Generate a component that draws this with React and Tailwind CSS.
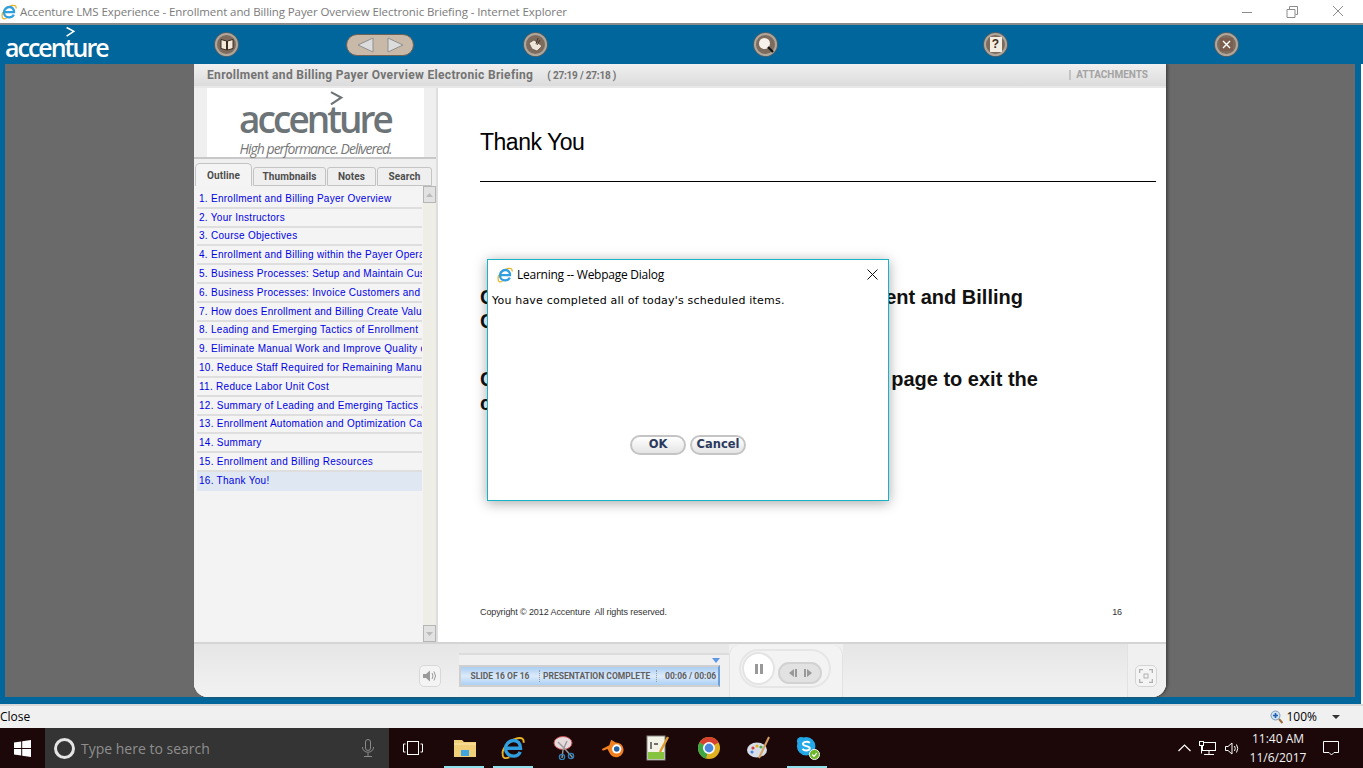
import React from 'react';

const outline = [
  '1. Enrollment and Billing Payer Overview',
  '2. Your Instructors',
  '3. Course Objectives',
  '4. Enrollment and Billing within the Payer Operations',
  '5. Business Processes: Setup and Maintain Customers',
  '6. Business Processes: Invoice Customers and Receive',
  '7. How does Enrollment and Billing Create Value',
  '8. Leading and Emerging Tactics of Enrollment',
  '9. Eliminate Manual Work and Improve Quality of',
  '10. Reduce Staff Required for Remaining Manual',
  '11. Reduce Labor Unit Cost',
  '12. Summary of Leading and Emerging Tactics and',
  '13. Enrollment Automation and Optimization Case',
  '14. Summary',
  '15. Enrollment and Billing Resources',
  '16. Thank You!',
];

const Chevron = ({ className, color }) => (
  <svg className={className} viewBox="0 0 15 20" fill="none">
    <path d="M1 2.5 L13 9 L1 17" stroke={color} strokeWidth="2.6" />
  </svg>
);

const IeIcon = ({ size = 16 }) => (
  <svg width={size} height={size} viewBox="0 0 16 16" fill="none">
    <path d="M1.2 12 C0.3 9 5 3 11 1.5 C14 0.8 15.5 2 15 4.5" stroke="#e8b428" strokeWidth="1.3" />
    <path d="M3.8 8.2 H13 C13 4.8 11 3 8.4 3 C5.4 3 3 5.4 3 8.4 C3 11.4 5.4 13.4 8.4 13.4 C10.4 13.4 12 12.4 12.8 10.6" stroke="#2f9fe0" strokeWidth="2.3" />
    <path d="M1.2 12 C0.8 14.8 3 15.4 5.6 14.2" stroke="#e8b428" strokeWidth="1.2" />
  </svg>
);

const RoundBtn = ({ ml, children }) => (
  <div className={`${ml} w-[23px] h-[23px] shrink-0 rounded-full bg-[#7d6c5e] border-2 border-[#b0a79c] flex items-center justify-center shadow-[0_0_0_1px_#4f5f68]`}>
    {children}
  </div>
);

const Tab = ({ label, active, w }) => (
  <div className={`${w} ${active ? 'h-[23px] bg-[#f4f4f4] border-b-0 rounded-t-[5px]' : 'h-[19px] bg-[#efefef] rounded-t-[3px] pb-[1px]'} border border-[#c4c4c4] flex items-center justify-center text-[10px] font-bold text-[#4d4d4d] tracking-[0.1px] font-['Roboto',sans-serif]`}>
    {label}
  </div>
);

const TaskIcon = ({ ml, children }) => (
  <div className={`${ml} w-6 h-6 shrink-0 flex items-center justify-center relative`}>{children}</div>
);

export default function App() {
  return (
    <div className="w-[1363px] h-[768px] overflow-hidden relative flex flex-col bg-white font-['Liberation_Sans',sans-serif]">
      {/* IE title bar */}
      <div className="h-[25px] shrink-0 bg-white border-b-2 border-[#8a8a8a] flex items-center">
        <div className="ml-[1px]"><IeIcon /></div>
        <span className="ml-[3px] text-[11.5px] text-[#7b7b7b] font-['Open_Sans',sans-serif] tracking-[-0.09px] whitespace-nowrap">
          Accenture LMS Experience - Enrollment and Billing Payer Overview Electronic Briefing - Internet Explorer
        </span>
        <svg className="ml-auto mr-[20px]" width="101" height="14" viewBox="0 0 101 14" fill="none" stroke="#8c8c8c">
          <path d="M0 7.5 H10" />
          <path d="M45 4.5 H53 V12.5 H45 Z M47.5 4 V1.5 H55.5 V9.5 H53.5" />
          <path d="M91 1 L101 11 M101 1 L91 11" />
        </svg>
      </div>

      {/* course toolbar */}
      <div className="h-[39px] shrink-0 bg-[#00669b] flex items-center relative">
        <div className="relative ml-[5px] w-[103px] text-white text-[25px] leading-none font-semibold font-['Open_Sans',sans-serif] tracking-[-2px] mt-[5px] whitespace-nowrap">
          accenture
          <Chevron className="absolute left-[60px] top-[-9px] w-[11px] h-[12px]" color="#ffffff" />
        </div>
        <RoundBtn ml="ml-[107px]">
          <svg width="14" height="13" viewBox="0 0 14 13"><path d="M1 1.5 L6.5 3 V12 L1 10.5 Z M13 1.5 L7.5 3 V12 L13 10.5 Z" fill="#f3e9da" stroke="#2e2015" strokeWidth="0.9" /></svg>
        </RoundBtn>
        <div className="ml-[108px] w-[68px] h-[22px] rounded-full bg-[#c8b9a8] border border-[#6e6155] flex items-center justify-center gap-[13px]">
          <svg width="17" height="16" viewBox="0 0 17 16"><path d="M16 1 V15 L1 8 Z" fill="#dcdcdc" stroke="#8f8f8f" /></svg>
          <svg width="17" height="16" viewBox="0 0 17 16"><path d="M1 1 V15 L16 8 Z" fill="#dcdcdc" stroke="#8f8f8f" /></svg>
        </div>
        <RoundBtn ml="ml-[110px]">
          <svg width="16" height="16" viewBox="0 0 16 16"><path d="M1 6 L6 3 L14 9 L9 14 L4 12 Z" fill="#efe6da" stroke="#5a4a3c" strokeWidth="0.7" /><path d="M10 1 L8 7 M12 3 L9 8" stroke="#4a3a2c" /></svg>
        </RoundBtn>
        <RoundBtn ml="ml-[207px]">
          <svg width="16" height="16" viewBox="0 0 16 16"><circle cx="6.5" cy="6.5" r="5.5" fill="#f5f1ea" /><path d="M10 10 L15 15" stroke="#111" strokeWidth="2.2" /></svg>
        </RoundBtn>
        <RoundBtn ml="ml-[207px]">
          <div className="w-[12px] h-[15px] bg-[#f4ede2] text-[#3d2c1e] text-[12px] font-bold leading-[15px] text-center">?</div>
        </RoundBtn>
        <RoundBtn ml="ml-[208px]">
          <div className="w-[13px] h-[13px] bg-[#7a5f50] text-white flex items-center justify-center">
            <svg width="9" height="9" viewBox="0 0 9 9"><path d="M1 1 L8 8 M8 1 L1 8" stroke="#fff" strokeWidth="1.4" /></svg>
          </div>
        </RoundBtn>
      </div>

      {/* stage */}
      <div className="h-[640px] shrink-0 mr-[2px] bg-[#00669b] pl-[5px] pr-[6px] pb-[7px]">
        <div className="h-full bg-[#6a6a6a] pl-[189px]">
          <div className="w-[972px] h-full flex flex-col bg-white rounded-b-[14px] overflow-hidden shadow-[2px_0_3px_#444]">
            <div className="h-[24px] shrink-0 bg-gradient-to-b from-[#f0f0f0] to-[#dcdcdc] border-b-2 border-[#e8e8e8] flex items-center pl-[13px] pr-[18px] font-['Roboto',sans-serif] font-bold text-[#737373]">
              <span className="text-[12px] tracking-[0.33px]">Enrollment and Billing Payer Overview Electronic Briefing</span>
              <span className="ml-[14px] text-[10px] tracking-[-0.2px]">( 27:19 / 27:18 )</span>
              <span className="ml-auto pl-[5px] border-l-2 border-[#c4c4c4] text-[10px] leading-[10px] text-[#a3a3a3]">ATTACHMENTS</span>
            </div>

            <div className="flex-1 flex min-h-0">
              {/* sidebar */}
              <div className="w-[244px] shrink-0 bg-[#efefef] border-r-2 border-[#dedede] flex flex-col">
                <div className="h-[71px] shrink-0 border-b-2 border-[#c8c8c8]">
                  <div className="ml-[13px] w-[217px] h-full bg-white relative flex flex-col items-center text-[#6d7478] font-['Open_Sans',sans-serif]">
                    <div className="mt-[10px] ml-[-1px] text-[37px] leading-[42px] font-semibold tracking-[-2.95px]">accenture</div>
                    <div className="text-[14px] leading-[16px] italic tracking-[-1px] mt-[1px] text-[#777]">High performance. Delivered.</div>
                    <Chevron className="absolute left-[122px] top-[2px] w-[15px] h-[17px]" color="#6d7478" />
                  </div>
                </div>
                <div className="flex items-end h-[27px] shrink-0 pl-[1px] gap-[1px]">
                  <Tab label="Outline" active w="w-[57px]" />
                  <Tab label="Thumbnails" w="w-[73px]" />
                  <Tab label="Notes" w="w-[49px]" />
                  <Tab label="Search" w="w-[55px]" />
                </div>
                <div className="flex-1 min-h-0 flex pl-[3px] bg-[#f3f3f3]">
                  <div className="w-[225px] shrink-0 overflow-hidden pt-[4px]">
                    {outline.map((item, index) => (
                      <div
                        key={index}
                        className={`h-[18.8px] pl-[2px] flex items-center whitespace-nowrap overflow-hidden text-[10px] tracking-[0.28px] text-[#0000e6] border-b-2 ${index === 15 ? 'bg-[#dfe8f2] border-[#dfe8f2]' : 'bg-[#f4f4f4] border-[#dedede]'}`}
                      >
                        {item}
                      </div>
                    ))}
                  </div>
                  <div className="w-[13px] ml-[1px] shrink-0 bg-[#eeeee6] flex flex-col justify-between">
                    <div className="h-[17px] bg-[#e2e2e2] border border-[#b5b5b5] flex items-center justify-center">
                      <svg width="7" height="4" viewBox="0 0 7 4"><path d="M3.5 0 L7 4 H0 Z" fill="#bbb" /></svg>
                    </div>
                    <div className="h-[17px] bg-[#e2e2e2] border border-[#b5b5b5] flex items-center justify-center">
                      <svg width="7" height="4" viewBox="0 0 7 4"><path d="M0 0 H7 L3.5 4 Z" fill="#bbb" /></svg>
                    </div>
                  </div>
                </div>
              </div>

              {/* slide */}
              <div className="flex-1 bg-white pl-[42px] pr-[10px] flex flex-col">
                <div className="h-[94px] shrink-0 border-b border-black pt-[39px] text-[23px] leading-[30px] text-black tracking-[-0.5px]">Thank You</div>
                <div className="mt-[103px] text-[20px] leading-[24px] font-bold text-[#111]">
                  <p className="whitespace-nowrap"><span className="tracking-[-0.38px]">Congratulations, you completed the Enrollm</span>ent and Billing<br />Course.</p>
                  <p className="mt-[34px] whitespace-nowrap"><span className="tracking-[-0.24px]">Click the Close button at the top of this web </span>page to exit the<br />course.</p>
                </div>
                <div className="mt-auto mb-[23px] flex justify-between text-[9px] text-[#333] pr-[34px] tracking-[-0.1px]">
                  <span>Copyright © 2012 Accenture&nbsp; All rights reserved.</span>
                  <span>16</span>
                </div>
              </div>
            </div>

            {/* playback bar */}
            <div className="h-[55px] shrink-0 bg-[#f0f0f0] border-t-2 border-[#d4d4d4] flex relative">
              <div className="w-[265px] shrink-0 bg-gradient-to-b from-[#e6e6e6] to-[#f2f2f2] flex items-start justify-end pr-[18px] pt-[21px]">
                <div className="w-[22px] h-[22px] rounded-[5px] bg-[#f4f4f4] border border-[#d8d8d8] flex items-center justify-center">
                  <svg width="14" height="12" viewBox="0 0 14 12" fill="#9a9a9a"><path d="M0 4 H3 L7 0.5 V11.5 L3 8 H0 Z" /><path d="M9 3 Q11 6 9 9 M11 1.5 Q14 6 11 10.5" stroke="#9a9a9a" fill="none" /></svg>
                </div>
              </div>
              <div className="w-[270px] shrink-0 bg-[#e8e8e8]">
                <div className="mt-[9px] h-[44px] bg-[#f0f0f0] border-t-2 border-[#dcdcdc] pt-[10px]">
                  <div className="w-[261px] h-[22px] bg-gradient-to-b from-[#a9cdf2] via-[#dcebfb] to-[#acd0f4] border-2 border-[#cfcfcf] border-r-[#6d9fdb] flex items-center text-[8.5px] font-bold text-[#5f5f5f] font-['Roboto',sans-serif] relative">
                    <span className="w-[78px] text-center">SLIDE 16 OF 16</span>
                    <span className="border-l border-dotted border-[#999] pl-[3px] w-[117px] whitespace-nowrap">PRESENTATION COMPLETE</span>
                    <span className="border-l border-dotted border-[#999] pl-[8px] whitespace-nowrap">00:06 / 00:06</span>
                    <svg className="absolute right-[-2px] top-[-9px]" width="8" height="5" viewBox="0 0 8 5"><path d="M0 0 H8 L4 5 Z" fill="#5f97e8" /></svg>
                  </div>
                </div>
              </div>
              <div className="mt-[1px] w-[114px] bg-[#f3f3f3] border-x border-[#e2e2e2] rounded-t-[10px] shrink-0 pl-[9px] pt-[4px]">
                <div className="w-[92px] h-[39px] rounded-full border-2 border-[#e6e6e6] flex items-start pl-[1px]">
                  <div className="mt-[1px] w-[33px] h-[33px] rounded-full bg-white border-2 border-[#e4e4e4] flex items-center justify-center gap-[2px]">
                    <div className="w-[3px] h-[10px] bg-[#999]" />
                    <div className="w-[3px] h-[10px] bg-[#999]" />
                  </div>
                  <div className="ml-[3px] mt-[11px] w-[44px] h-[22px] rounded-full bg-[#e2e2e2] border-2 border-[#d2d2d2] flex items-center justify-center gap-[7px]">
                    <svg width="8" height="8" viewBox="0 0 8 8" fill="#999"><path d="M5 0 V8 L0 4 Z M6 0 H8 V8 H6 Z" /></svg>
                    <svg width="8" height="8" viewBox="0 0 8 8" fill="#999"><path d="M0 0 H2 V8 H0 Z M3 0 V8 L8 4 Z" /></svg>
                  </div>
                </div>
              </div>
              <div className="flex-1 bg-gradient-to-b from-[#e6e6e6] to-[#f2f2f2]" />
              <div className="w-[39px] bg-[#f0f0f0] border-l border-[#e2e2e2] pt-[21px] pl-[7px]">
                <div className="w-[22px] h-[22px] rounded-[5px] bg-[#f4f4f4] border border-[#d4d4d4] flex items-center justify-center">
                  <svg width="14" height="14" viewBox="0 0 14 14" fill="none" stroke="#b0b0b0"><rect x="5" y="5" width="4" height="4" /><path d="M0.5 4 V0.5 H4 M10 0.5 H13.5 V4 M13.5 10 V13.5 H10 M4 13.5 H0.5 V10" strokeWidth="1.6" /></svg>
                </div>
              </div>
            </div>
          </div>
        </div>
      </div>

      {/* IE status bar */}
      <div className="h-[24px] shrink-0 border-t-2 border-[#d9d9d9] bg-[#f0f0f0] flex items-center text-[12px] text-black font-['Open_Sans',sans-serif]">
        <span>Close</span>
        <svg className="ml-auto" width="13" height="14" viewBox="0 0 13 14"><circle cx="5.5" cy="5.5" r="4.5" fill="#cfe3f5" stroke="#7f9cb8" /><path d="M3 5.5 H8 M5.5 3 V8" stroke="#1f5fb0" strokeWidth="1.6" /><path d="M9 9 L12.5 13" stroke="#9c6b3c" strokeWidth="2" /></svg>
        <span className="ml-[3px]">100%</span>
        <svg className="ml-[15px] mr-[23px]" width="8" height="4" viewBox="0 0 8 4"><path d="M0 0 H8 L4 4 Z" fill="#333" /></svg>
      </div>

      {/* taskbar */}
      <div className="flex-1 bg-[#1c0808] flex items-stretch relative">
        <div className="w-[45px] shrink-0 flex items-center justify-center">
          <svg width="17" height="17" viewBox="0 0 17 17" fill="#fff"><path d="M0 2.4 L7.2 1.4 V8 H0 Z M8.2 1.2 L17 0 V8 H8.2 Z M0 9 H7.2 V15.6 L0 14.6 Z M8.2 9 H17 V17 L8.2 15.8 Z" /></svg>
        </div>
        <div className="w-[344px] shrink-0 bg-[#343434] flex items-center pl-[9px] pr-[15px] text-[14px] text-[#8e8e8e] font-['Open_Sans',sans-serif]">
          <div className="w-[21px] h-[21px] rounded-full border-[3px] border-[#e4e4e4]" />
          <span className="ml-[6px]">Type here to search</span>
          <svg className="ml-auto" width="12" height="18" viewBox="0 0 12 18" fill="none" stroke="#8a8a8a"><rect x="3.5" y="0.5" width="5" height="11" rx="2.5" /><path d="M0.5 8 C0.5 15 11.5 15 11.5 8 M6 14 V17 M2 17.5 H10" /></svg>
        </div>
        <svg className="ml-[14px] self-center shrink-0" width="20" height="14" viewBox="0 0 20 14" fill="none" stroke="#fff"><rect x="4.5" y="0.5" width="11" height="13" /><path d="M2.5 3 H0.5 V11 H2.5 M17.5 3 H19.5 V11 H17.5" /></svg>
        <div className="flex items-center">
          <TaskIcon ml="ml-[30px]">
            <svg width="22" height="18" viewBox="0 0 22 18"><path d="M0 1 H8 L10 3 H22 V18 H0 Z" fill="#f0cf78" /><path d="M7 17 V11 H15 V17" fill="#3fa5e0" /><path d="M0 5 H22" stroke="#fbe7ad" /></svg>
          </TaskIcon>
          <TaskIcon ml="ml-[24px]"><IeIcon size={24} /></TaskIcon>
          <TaskIcon ml="ml-[27px]">
            <svg width="22" height="24" viewBox="0 0 22 24" fill="none"><ellipse cx="10" cy="7" rx="9" ry="6.5" fill="#e6dadd" stroke="#c0484e" /><path d="M5 6 L12 13 L20 22 M14 5 L10 14 L9 22" stroke="#999" strokeWidth="1.4" /><circle cx="18" cy="20" r="2.6" stroke="#2f7fb8" strokeWidth="1.4" /><circle cx="9" cy="21" r="2.6" stroke="#2f7fb8" strokeWidth="1.4" /></svg>
          </TaskIcon>
          <TaskIcon ml="ml-[25px]">
            <svg width="26" height="20" viewBox="0 0 26 20"><path d="M1 11 L9 7 L11 1 L16 4 A8 8 0 1 1 9 15 L7 11 L2 13 Z" fill="#f08020" /><circle cx="17" cy="11" r="5" fill="#fff" /><circle cx="17" cy="11" r="3" fill="#1f5f9e" /></svg>
          </TaskIcon>
          <TaskIcon ml="ml-[21px]">
            <svg width="24" height="26" viewBox="0 0 24 26"><rect x="1" y="1" width="18" height="24" fill="#f2f2e6" stroke="#888" /><rect x="2" y="17" width="16" height="7" fill="#86c440" /><path d="M5 7 V14 M8 9 H12" stroke="#444" strokeWidth="1.4" /><path d="M22 2 L14 17" stroke="#e09a30" strokeWidth="2.4" /></svg>
          </TaskIcon>
          <TaskIcon ml="ml-[27px]">
            <svg width="22" height="22" viewBox="0 0 22 22"><circle cx="11" cy="11" r="11" fill="#e0b020" /><path d="M11 11 L1.5 5.5 A11 11 0 0 1 20.5 5.5 Z" fill="#d8402f" /><path d="M1.5 5.5 A11 11 0 0 0 8 21.6 L11 11 Z" fill="#3fa648" /><circle cx="11" cy="11" r="5.2" fill="#4a86e0" stroke="#fff" strokeWidth="1.6" /></svg>
          </TaskIcon>
          <TaskIcon ml="ml-[26px]">
            <svg width="24" height="24" viewBox="0 0 24 24"><ellipse cx="10" cy="14" rx="10" ry="7.5" fill="#d9dfe8" /><circle cx="6" cy="12" r="1.6" fill="#d84040" /><circle cx="10" cy="10" r="1.6" fill="#e0b020" /><circle cx="14" cy="11" r="1.6" fill="#50a850" /><circle cx="5" cy="16" r="1.6" fill="#4a86e0" /><path d="M22 1 L12 22" stroke="#d8a060" strokeWidth="2" /></svg>
          </TaskIcon>
          <TaskIcon ml="ml-[25px]">
            <svg width="26" height="26" viewBox="0 0 26 26"><circle cx="11" cy="11" r="10" fill="#22a8e8" /><circle cx="5.5" cy="5.5" r="4.5" fill="#22a8e8" /><path d="M15 7.5 C13 5.5 7.5 6 7.5 8.7 C7.5 11.5 15 10.5 15 13.4 C15 16.2 9 16.5 7 14" stroke="#fff" strokeWidth="2" fill="none" /><circle cx="20" cy="20" r="5.5" fill="#6fb52e" stroke="#fff" /><path d="M17.5 20 L19.5 22 L22.5 18.5" stroke="#fff" strokeWidth="1.3" fill="none" /></svg>
          </TaskIcon>
        </div>
        <div className="ml-auto flex items-center text-white">
          <svg width="13" height="8" viewBox="0 0 13 8" fill="none" stroke="#fff" strokeWidth="1.2"><path d="M0.5 7 L6.5 1 L12.5 7" /></svg>
          <svg className="ml-[8px]" width="17" height="15" viewBox="0 0 17 15" fill="none" stroke="#fff"><rect x="3.5" y="1.5" width="13" height="8" /><rect x="0.5" y="0.5" width="4" height="4" fill="#1c0808" /><path d="M10 9.5 V13.5 M5 13.5 H15 M2.5 4.5 V12.5" /></svg>
          <svg className="ml-[9px]" width="16" height="13" viewBox="0 0 16 13" fill="none" stroke="#fff"><path d="M0.5 4.5 H3 L7 1 V12 L3 8.5 H0.5 Z M9.5 4 Q11 6.5 9.5 9 M11.5 2.5 Q14 6.5 11.5 10.5" /></svg>
          <div className="w-[62px] ml-[6px] text-[12px] leading-[19px] text-center font-['Open_Sans',sans-serif] text-[#f2f2f2]">
            <div>11:40 AM</div>
            <div>11/6/2017</div>
          </div>
          <svg className="ml-[14px] mr-[24px]" width="16" height="15" viewBox="0 0 16 15" fill="none" stroke="#fff"><path d="M0.5 0.5 H15.5 V11.5 H11 L8.5 14 L6 11.5 H0.5 Z" /></svg>
        </div>
        <div className="absolute bottom-0 left-[444px] w-[40px] h-[2px] bg-[#8fe0ea]" />
        <div className="absolute bottom-0 left-[493px] w-[40px] h-[2px] bg-[#8fe0ea]" />
        <div className="absolute bottom-0 left-[787px] w-[40px] h-[2px] bg-[#8fe0ea]" />
      </div>

      {/* webpage dialog */}
      <div className="absolute left-[487px] top-[259px] w-[402px] h-[242px] bg-white border border-[#17b4c8] shadow-[0_2px_12px_rgba(0,0,0,0.35)] flex flex-col">
        <div className="h-[29px] shrink-0 flex items-center pl-[9px] pr-[10px]">
          <IeIcon />
          <span className="ml-[4px] text-[12px] text-black font-['Open_Sans',sans-serif] tracking-[-0.25px]">Learning -- Webpage Dialog</span>
          <svg className="ml-auto" width="11" height="11" viewBox="0 0 11 11" stroke="#111"><path d="M0.5 0.5 L10.5 10.5 M10.5 0.5 L0.5 10.5" /></svg>
        </div>
        <div className="pl-[4px] text-[11px] leading-[13px] mt-[5px] text-black tracking-[0.2px] font-['DejaVu_Sans',sans-serif]">
          You have completed all of today's scheduled items.
        </div>
        <div className="mt-[128px] flex justify-center gap-[4px] text-[11.5px] font-bold text-[#2b3a5e] font-['DejaVu_Sans',sans-serif]">
          <button className="w-[56px] h-[20px] rounded-full border-2 border-[#c4c4c4] bg-gradient-to-b from-white to-[#e4e4e4] leading-none">OK</button>
          <button className="w-[56px] h-[20px] rounded-full border-2 border-[#c4c4c4] bg-gradient-to-b from-white to-[#e4e4e4] leading-none">Cancel</button>
        </div>
      </div>
    </div>
  );
}
